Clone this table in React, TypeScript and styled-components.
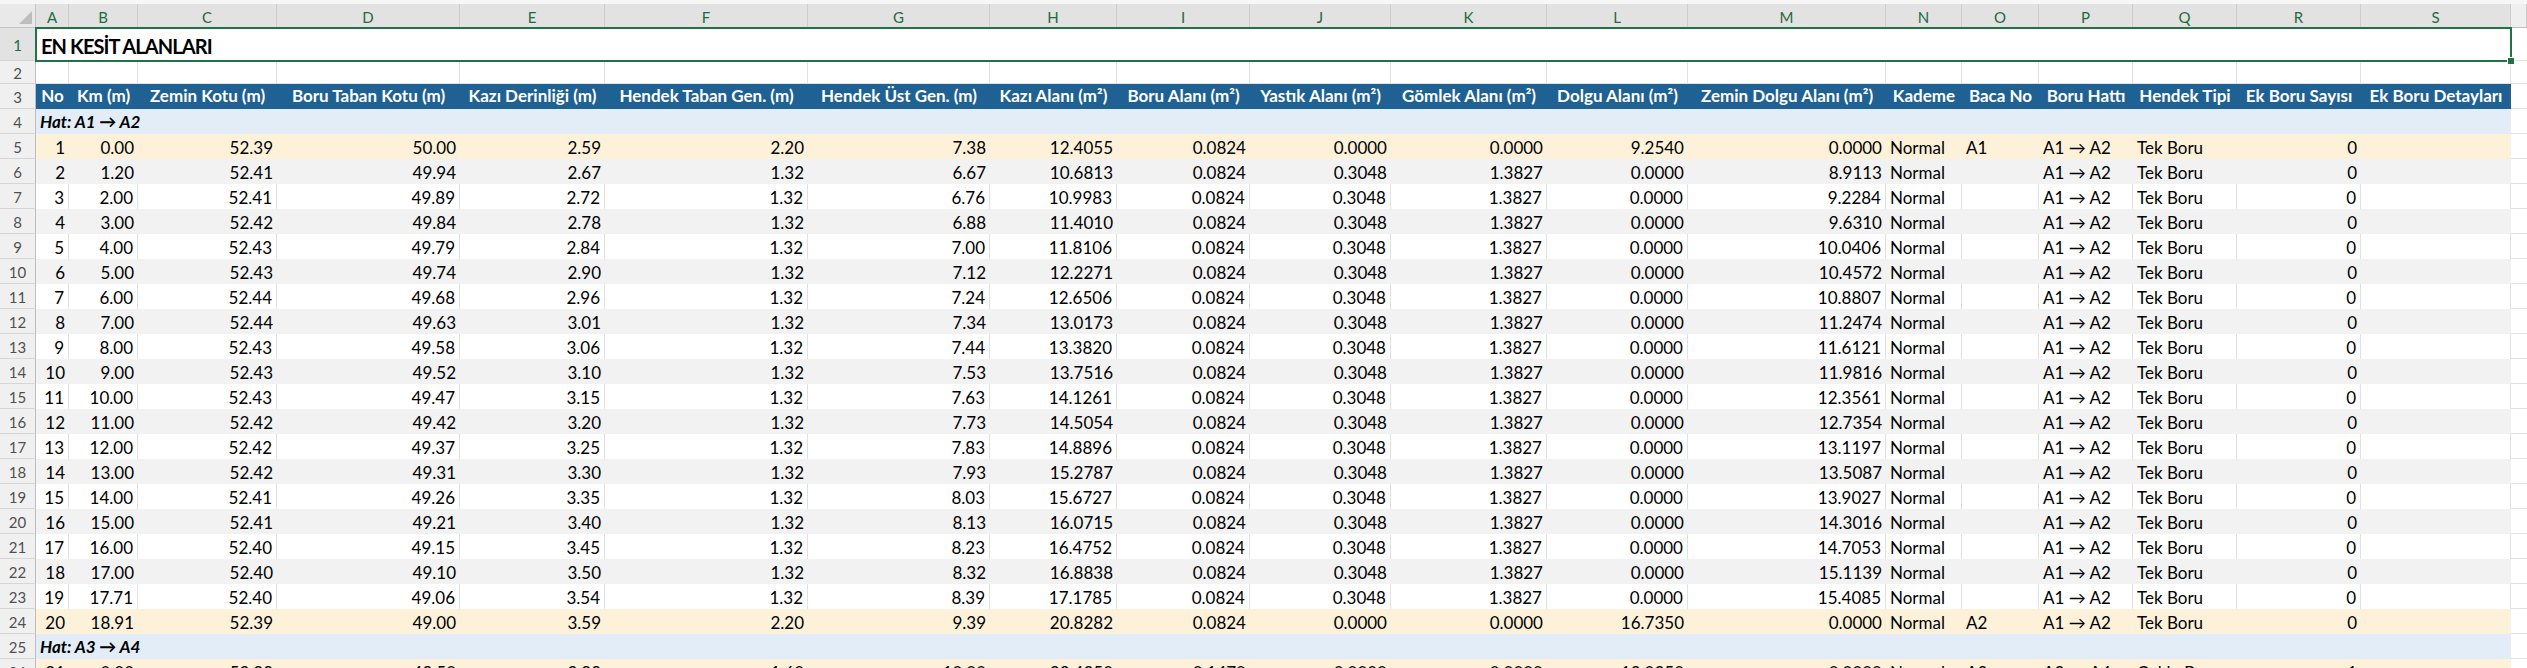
import React from "react";
import styled, { createGlobalStyle, css } from "styled-components";

const COLS =
  "36px 33px 69px 139px 183px 145px 203px 182px 127px 133px 141px 156px 141px 198px 76px 77px 94px 104px 124px 150px 1fr";

const LETTERS = "ABCDEFGHIJKLMNOPQRS".split("");

const HEADERS = [
  "No",
  "Km (m)",
  "Zemin Kotu (m)",
  "Boru Taban Kotu (m)",
  "Kazı Derinliği (m)",
  "Hendek Taban Gen. (m)",
  "Hendek Üst Gen. (m)",
  "Kazı Alanı (m²)",
  "Boru Alanı (m²)",
  "Yastık Alanı (m²)",
  "Gömlek Alanı (m²)",
  "Dolgu Alanı (m²)",
  "Zemin Dolgu Alanı (m²)",
  "Kademe",
  "Baca No",
  "Boru Hattı",
  "Hendek Tipi",
  "Ek Boru Sayısı",
  "Ek Boru Detayları",
];

// A..M sayı, N..Q metin, R sayı, S metin
const ALIGN: Array<"left" | "right"> = [
  ...Array(13).fill("right"),
  "left",
  "left",
  "left",
  "left",
  "right",
  "left",
];

type Tone = "edge" | "gray" | "white";

// no, km, zemin, boru taban, kazı der., üst gen., kazı alanı, zemin dolgu
const MIDDLE: string[][] = [
  ["2", "1.20", "52.41", "49.94", "2.67", "6.67", "10.6813", "8.9113"],
  ["3", "2.00", "52.41", "49.89", "2.72", "6.76", "10.9983", "9.2284"],
  ["4", "3.00", "52.42", "49.84", "2.78", "6.88", "11.4010", "9.6310"],
  ["5", "4.00", "52.43", "49.79", "2.84", "7.00", "11.8106", "10.0406"],
  ["6", "5.00", "52.43", "49.74", "2.90", "7.12", "12.2271", "10.4572"],
  ["7", "6.00", "52.44", "49.68", "2.96", "7.24", "12.6506", "10.8807"],
  ["8", "7.00", "52.44", "49.63", "3.01", "7.34", "13.0173", "11.2474"],
  ["9", "8.00", "52.43", "49.58", "3.06", "7.44", "13.3820", "11.6121"],
  ["10", "9.00", "52.43", "49.52", "3.10", "7.53", "13.7516", "11.9816"],
  ["11", "10.00", "52.43", "49.47", "3.15", "7.63", "14.1261", "12.3561"],
  ["12", "11.00", "52.42", "49.42", "3.20", "7.73", "14.5054", "12.7354"],
  ["13", "12.00", "52.42", "49.37", "3.25", "7.83", "14.8896", "13.1197"],
  ["14", "13.00", "52.42", "49.31", "3.30", "7.93", "15.2787", "13.5087"],
  ["15", "14.00", "52.41", "49.26", "3.35", "8.03", "15.6727", "13.9027"],
  ["16", "15.00", "52.41", "49.21", "3.40", "8.13", "16.0715", "14.3016"],
  ["17", "16.00", "52.40", "49.15", "3.45", "8.23", "16.4752", "14.7053"],
  ["18", "17.00", "52.40", "49.10", "3.50", "8.32", "16.8838", "15.1139"],
  ["19", "17.71", "52.40", "49.06", "3.54", "8.39", "17.1785", "15.4085"],
];

const firstA1 = ["1", "0.00", "52.39", "50.00", "2.59", "2.20", "7.38", "12.4055", "0.0824", "0.0000", "0.0000", "9.2540", "0.0000", "Normal", "A1", "A1 → A2", "Tek Boru", "0", ""];
const lastA1 = ["20", "18.91", "52.39", "49.00", "3.59", "2.20", "9.39", "20.8282", "0.0824", "0.0000", "0.0000", "16.7350", "0.0000", "Normal", "A2", "A1 → A2", "Tek Boru", "0", ""];
const firstA3 = ["21", "0.00", "52.38", "49.50", "2.88", "1.60", "10.00", "22.4350", "0.1470", "0.0000", "0.0000", "18.0350", "0.0000", "Normal", "A3", "A3 → A4", "Çoklu Boru", "1", ""];

const middleRow = (m: string[]) => [
  m[0], m[1], m[2], m[3], m[4], "1.32", m[5], m[6],
  "0.0824", "0.3048", "1.3827", "0.0000", m[7],
  "Normal", "", "A1 → A2", "Tek Boru", "0", "",
];

type SheetRow =
  | { kind: "group"; label: string }
  | { kind: "data"; tone: Tone; cells: string[] };

const BODY: SheetRow[] = [
  { kind: "group", label: "Hat: A1 → A2" },
  { kind: "data", tone: "edge", cells: firstA1 },
  ...MIDDLE.map((m): SheetRow => ({
    kind: "data",
    tone: Number(m[0]) % 2 === 0 ? "gray" : "white",
    cells: middleRow(m),
  })),
  { kind: "data", tone: "edge", cells: lastA1 },
  { kind: "group", label: "Hat: A3 → A4" },
  { kind: "data", tone: "edge", cells: firstA3 },
];

const GlobalStyle = createGlobalStyle`
  html, body {
    margin: 0;
    padding: 0;
    background: #ffffff;
  }
  body {
    width: 2527px;
    height: 668px;
    overflow: hidden;
    font-family: "Lato", "DejaVu Sans", sans-serif;
    color: #000;
  }
`;

const Sheet = styled.div`
  width: 2527px;
  display: flex;
  flex-direction: column;
`;

const TopStrip = styled.div`
  height: 4px;
  background: #f6f6f6;
`;

const Row = styled.div<{ $h: number }>`
  display: grid;
  grid-template-columns: ${COLS};
  height: ${({ $h }) => $h}px;
`;

const Corner = styled.div`
  position: relative;
  background: #e9e9e9;
  border-right: 1px solid #c4c4c4;
  border-bottom: 1px solid #c4c4c4;
  &::after {
    content: "";
    position: absolute;
    right: 3px;
    bottom: 3px;
    border-style: solid;
    border-width: 0 0 13px 13px;
    border-color: transparent transparent #bdbdbd transparent;
  }
`;

const ColLetter = styled.div<{ $active?: boolean }>`
  display: flex;
  align-items: center;
  justify-content: center;
  font-size: 15px;
  background: ${({ $active }) => ($active ? "#e2e2e2" : "#efefef")};
  color: ${({ $active }) => ($active ? "#1e6b3d" : "#444")};
  border-right: 1px solid #cdcdcd;
  border-bottom: 1px solid #bdbdbd;
  padding-top: 2px;
`;

const RowHead = styled.div<{ $active?: boolean }>`
  display: flex;
  align-items: center;
  justify-content: center;
  font-size: 15px;
  background: ${({ $active }) => ($active ? "#e2e2e2" : "#f0f0f0")};
  color: ${({ $active }) => ($active ? "#1e6b3d" : "#505050")};
  border-right: 1px solid #bdbdbd;
  border-bottom: 1px solid #d6d6d6;
  padding-top: 2px;
`;

const TitleCell = styled.div`
  position: relative;
  z-index: 2;
  grid-column: 2 / 21;
  display: flex;
  align-items: center;
  padding: 2px 5px 0;
  font-size: 20px;
  font-weight: 700;
  letter-spacing: -0.9px;
  background: #fff;
  outline: 2px solid #217346;
  outline-offset: -1px;
  &::after {
    content: "";
    position: absolute;
    right: -4px;
    bottom: -4px;
    width: 6px;
    height: 6px;
    background: #217346;
    border: 1px solid #fff;
  }
`;

const GridCell = styled.div`
  background: #fff;
  border-right: 1px solid #e1e1e1;
  border-bottom: 1px solid #e1e1e1;
`;

const HeadCell = styled.div`
  display: flex;
  align-items: flex-end;
  justify-content: center;
  padding-bottom: 3px;
  background: #1f6193;
  color: #fff;
  font-size: 17px;
  font-weight: 700;
  white-space: nowrap;
  overflow: hidden;
`;

const GroupCell = styled.div`
  grid-column: 2 / 21;
  display: flex;
  align-items: flex-end;
  padding: 0 4px 2px;
  background: #e3edf8;
  font-size: 17px;
  font-weight: 700;
  font-style: italic;
`;

const toneBg: Record<Tone, string> = {
  edge: "#fdf1da",
  gray: "#f2f2f2",
  white: "#ffffff",
};

const Cell = styled.div<{ $align: "left" | "right"; $tone: Tone }>`
  display: flex;
  align-items: flex-end;
  justify-content: ${({ $align }) => ($align === "right" ? "flex-end" : "flex-start")};
  padding: 0 4px 1px;
  font-size: 17px;
  white-space: nowrap;
  overflow: hidden;
  background: ${({ $tone }) => toneBg[$tone]};
  ${({ $tone }) =>
    $tone === "white" &&
    css`
      border-right: 1px solid #e1e1e1;
    `}
`;

const Spill = styled.div`
  background: #fff;
  border-bottom: 1px solid #e1e1e1;
`;

export default function App() {
  return (
    <>
      <GlobalStyle />
      <Sheet>
        <TopStrip />
        <Row $h={24}>
          <Corner />
          {LETTERS.map((l) => (
            <ColLetter key={l} $active>
              {l}
            </ColLetter>
          ))}
          <ColLetter />
        </Row>

        <Row $h={33}>
          <RowHead $active>1</RowHead>
          <TitleCell>EN KESİT ALANLARI</TitleCell>
          <Spill />
        </Row>

        <Row $h={23}>
          <RowHead>2</RowHead>
          {LETTERS.map((l) => (
            <GridCell key={l} />
          ))}
          <Spill />
        </Row>

        <Row $h={25}>
          <RowHead>3</RowHead>
          {HEADERS.map((h) => (
            <HeadCell key={h}>{h}</HeadCell>
          ))}
          <Spill />
        </Row>

        {BODY.map((r, i) => (
          <Row key={i} $h={25}>
            <RowHead>{i + 4}</RowHead>
            {r.kind === "group" ? (
              <GroupCell>{r.label}</GroupCell>
            ) : (
              r.cells.map((c, j) => (
                <Cell key={j} $align={ALIGN[j]} $tone={r.tone}>
                  {c}
                </Cell>
              ))
            )}
            <Spill />
          </Row>
        ))}
      </Sheet>
    </>
  );
}
